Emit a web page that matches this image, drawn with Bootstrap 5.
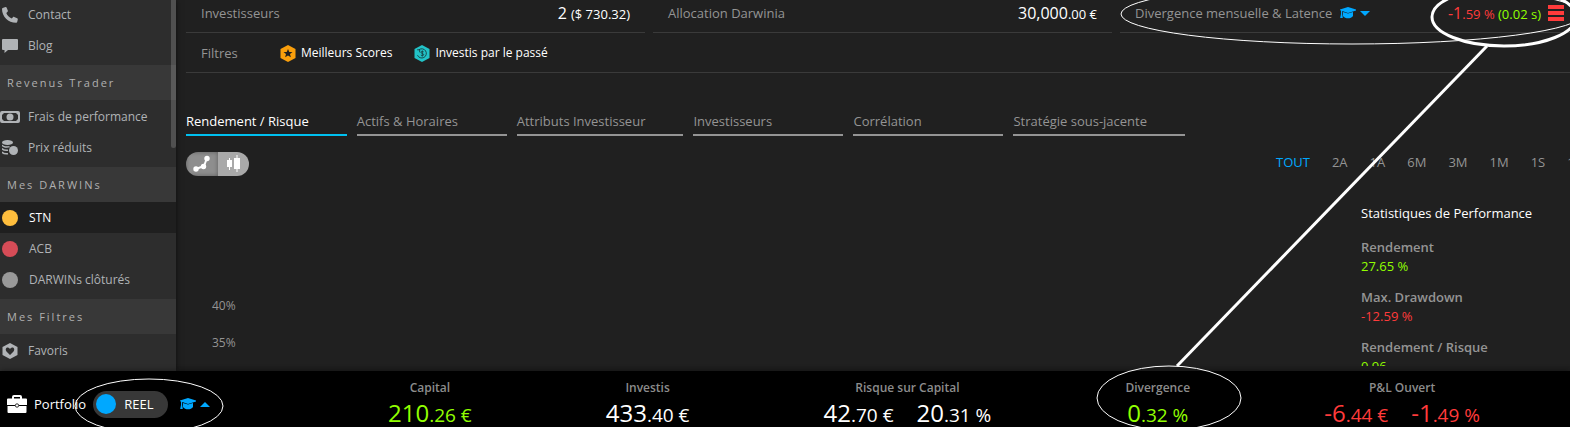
<!DOCTYPE html>
<html lang="fr">
<head>
<meta charset="utf-8">
<meta name="viewport" content="width=device-width, initial-scale=1">
<title>STN - Rendement / Risque</title>
<link href="https://cdn.jsdelivr.net/npm/bootstrap@5.3.0/dist/css/bootstrap.min.css" rel="stylesheet">
<style>
:root{--grey:#949494;--blue:#00a8ff;--green:#91ff00;--red:#ff3b3b;}
body{font-family:"Open Sans","Noto Sans",sans-serif;font-size:13px;line-height:20px;background:#202020;color:var(--grey);}
a{color:inherit;text-decoration:none;}
button{background:none;border:0;padding:0;color:inherit;}
svg{display:block;flex:none;}
/* sidebar */
.side{width:176px;background:#2d2d2d;color:#b0b3b6;font-size:12px;box-shadow:0 0 6px rgba(0,0,0,.6);z-index:2;}
.side-scroll{width:5px;height:148px;background:rgba(255,255,255,.17);border-radius:0 0 3px 3px;top:0;right:0;}
.side-inner{margin-top:-2px;}
.side-group{padding:1px 0 4px;}
.side-head{height:35px;padding-left:7px;background:#383838;letter-spacing:2px;color:#b0b0b0;font-size:11px;}
.side-link{height:31px;padding-left:2px;gap:10px;}
.side-link.current{background:#1f1f1f;color:#fff;}
.side-wide{padding-left:0;gap:8px;}
.side-darwin{gap:11px;}
.dot{width:16px;height:16px;border-radius:50%;flex:none;}
/* main */
.content{padding-left:10px;border-bottom:5px solid #1e1e1e;}
.wide{margin-right:-9px;}
.summary{gap:8px;}
.summary-cell{height:33px;padding:0 15px 6px;border-bottom:1px solid #3a3a3a;}
.fig{font-size:16px;}
.fig small{font-size:13px;}
.filters{height:40px;padding:1px 0 0 15px;border-bottom:1px solid #3a3a3a;color:var(--grey);}
.filters-title{width:79px;}
.filter-item{gap:5px;margin-right:22px;color:#fff;font-size:12px;}
.menu-btn{margin-left:7px;}
.tabs-row{margin-top:38px;gap:10px;}
.tab-item{min-width:150px;padding:0 38px 3px 0;border-bottom:2px solid #949494;}
.tab-item.active{color:#fff;border-color:#00c0f0;}
.tools{margin-top:16px;height:24px;}
.seg{border-radius:12px;overflow:hidden;}
.seg button{width:32px;height:24px;background:#a9a9a9;}
.seg button.active{background:#8e8e8e;box-shadow:inset 0 0 4px rgba(0,0,0,.35);}
.seg button+button{width:31px;}
.periods{gap:22px;width:294px;flex:none;margin-top:-4px;}
.chart-axis{padding:120px 0 0 26px;font-size:12px;gap:17px;}
.stats{width:209px;padding-top:27px;flex:none;}
.stats dt{font-weight:600;line-height:20px;color:#949494;}
.stats dd{line-height:18px;margin-bottom:12px;}
.stats-title{font-size:13px;line-height:20px;color:#fff;margin-bottom:14px;}
/* footer */
.dock{height:56px;background:#000;z-index:3;box-shadow:0 0 6px rgba(0,0,0,.45);}
.dock-left{width:388px;padding:10px 0 0 7px;flex:none;}
.dock-name{color:#fff;margin:0 7px;}
.mode{width:75px;height:27px;border-radius:14px;background:#383838;color:#fff;padding-left:3px;font-size:13px;gap:8px;margin-right:12px;}
.mode-knob{width:20px;height:20px;border-radius:50%;background:var(--blue);}
.dock-stats{padding:7px 90px 0 0;}
.dock-label{font-size:12px;font-weight:600;line-height:20px;color:#8c8c8c;}
.dock-val{font-size:24px;line-height:29px;color:#fff;gap:23px;}
.dock-val small{font-size:19px;}
.c-blue{color:var(--blue);} .c-green{color:var(--green);} .c-red{color:var(--red);}
.notes{inset:0;z-index:10;pointer-events:none;}
</style>
</head>
<body>
<svg width="0" height="0" class="position-absolute">
  <symbol id="cap" viewBox="0 0 16 12"><path fill="currentColor" d="M8 0 16 2.500v1L8 5.900 2.200 4.100v3l.6 3.900H.2L1 7.100V3.500L0 3.200v-.7ZM3 5 8 6.500 13 5v4C12 10.500 10 11.300 8 11.300S4 10.500 3 9Z"/></symbol>
</svg>
<div class="vh-100 d-flex flex-column overflow-hidden position-relative">
  <div class="d-flex flex-grow-1 overflow-hidden">
    <nav class="side position-relative flex-shrink-0">
      <div class="side-scroll position-absolute"></div>
      <div class="side-inner">
        <div class="side-group">
          <a href="#" class="side-link d-flex align-items-center"><svg width="16" height="16" viewBox="0 0 16 16"><path fill="currentColor" d="M1.300.7 3.500.1c.5-.1.9.1 1.100.5l1.200 3c.2.4.1.8-.2 1.100L4.300 5.900c.9 2.300 2.900 4.400 5.500 5.600l1.300-1.400c.3-.3.7-.4 1.100-.2l3 1.400c.5.2.7.6.6 1.100l-.6 2.600c-.1.500-.500.8-1 .8C6.300 15.900 0 9.500 0 2 0 1.300.6.800 1.300.7Z"/></svg>Contact</a>
          <a href="#" class="side-link d-flex align-items-center"><svg width="16" height="16" viewBox="0 0 16 16"><path fill="currentColor" d="M1 1h14q1 0 1 1v9q0 1-1 1H6l-3.500 3V12H1q-1 0-1-1V2q0-1 1-1Z"/></svg>Blog</a>
        </div>
        <div class="side-head d-flex align-items-center">Revenus Trader</div>
        <div class="side-group">
          <a href="#" class="side-link side-wide d-flex align-items-center"><svg width="20" height="12" viewBox="0 0 20 12"><rect x="1" y="1" width="18" height="10" rx="1" fill="none" stroke="currentColor" stroke-width="2"/><path fill="currentColor" d="M1 1h4L1 5Zm18 0h-4l4 4ZM1 11h4L1 7Zm18 0h-4l4-4Z"/><circle cx="10" cy="6" r="3.500" fill="currentColor"/></svg>Frais de performance</a>
          <a href="#" class="side-link d-flex align-items-center"><svg width="16" height="16" viewBox="0 0 16 16"><ellipse cx="5.500" cy="2.500" rx="5.500" ry="2.500" fill="currentColor"/><path d="M0 5c1 2 5 2.500 7.500 1.600M0 8.500c1 1.500 4 2 6 1.700M0 12c1 1.500 4 2 6 1.700" fill="none" stroke="currentColor" stroke-width="1.500"/><circle cx="11.500" cy="10.500" r="4.500" fill="currentColor"/></svg>Prix réduits</a>
        </div>
        <div class="side-head d-flex align-items-center">Mes DARWINs</div>
        <div class="side-group pt-0">
          <a href="#" class="side-link side-darwin current d-flex align-items-center"><span class="dot" style="background:#ffbe3d"></span>STN</a>
          <a href="#" class="side-link side-darwin d-flex align-items-center"><span class="dot" style="background:#d64c57"></span>ACB</a>
          <a href="#" class="side-link side-darwin d-flex align-items-center"><span class="dot" style="background:#999"></span>DARWINs clôturés</a>
        </div>
        <div class="side-head d-flex align-items-center">Mes Filtres</div>
        <div class="side-group">
          <a href="#" class="side-link d-flex align-items-center"><svg width="16" height="16" viewBox="0 0 16 16"><path fill="currentColor" d="m8 0 7.500 4v8L8 16 .5 12V4Z"/><path fill="#2d2d2d" d="M8 12 4.500 8.500C3 6.500 4 4.500 5.700 4.500 7 4.500 8 6 8 6s1-1.500 2.300-1.500C12 4.500 13 6.500 11.500 8.500Z"/></svg>Favoris</a>
        </div>
      </div>
    </nav>

    <main class="content flex-grow-1 overflow-hidden">
      <div class="wide">
        <div class="summary d-flex">
          <div class="summary-cell col d-flex align-items-center justify-content-between"><span>Investisseurs</span><span class="fig text-white">2 <small>($ 730.32)</small></span></div>
          <div class="summary-cell col d-flex align-items-center justify-content-between"><span>Allocation Darwinia</span><span class="fig text-white">30,000<small>.00 €</small></span></div>
          <div class="summary-cell col d-flex align-items-center">
            <span>Divergence mensuelle &amp; Latence</span>
            <button type="button" class="c-blue d-flex align-items-center gap-1 ms-2" aria-label="Aide"><svg width="16" height="12"><use href="#cap"/></svg><svg width="10" height="5" viewBox="0 0 10 5"><path fill="currentColor" d="M0 0h10L5 5Z"/></svg></button>
            <span class="fig c-red ms-auto">-1<small>.59 % <span class="c-green">(0.02 s)</span></small></span>
            <button type="button" class="menu-btn c-red" aria-label="Menu"><svg width="16" height="16" viewBox="0 0 16 16"><path fill="currentColor" d="M0 0h16v4H0Zm0 6h16v4H0Zm0 6h16v4H0Z"/></svg></button>
          </div>
        </div>
        <div class="filters d-flex align-items-center">
          <span class="filters-title">Filtres</span>
          <a href="#" class="filter-item d-flex align-items-center"><svg width="16" height="17" viewBox="0 0 16 17"><path fill="#fa9f0c" d="m8 0 7.500 4v9L8 17 .5 13V4Z"/><path fill="#202020" d="m8 4 1.300 3h3.200L10 9l.9 3.200L8 10.500l-2.900 1.700L6 9 3.500 7h3.200Z"/></svg>Meilleurs Scores</a>
          <a href="#" class="filter-item d-flex align-items-center"><svg width="16" height="17" viewBox="0 0 16 17"><path fill="#22c3c8" d="m8 0 7.500 4v9L8 17 .5 13V4Z"/><path d="M5 4.700a4.600 4.600 0 1 1-1.500 5.500M3.200 4.800h2.500v2.500M9.600 6.800C8.500 6 6.900 6.500 7 7.500c.1 1.200 2.700.8 2.700 2.100 0 1.200-1.900 1.300-2.900.5M8.300 5.500v6" fill="none" stroke="#17474a"/></svg>Investis par le passé</a>
        </div>
        <div class="tabs-row d-flex">
          <a href="#" class="tab-item active">Rendement / Risque</a>
          <a href="#" class="tab-item">Actifs &amp; Horaires</a>
          <a href="#" class="tab-item">Attributs Investisseur</a>
          <a href="#" class="tab-item">Investisseurs</a>
          <a href="#" class="tab-item">Corrélation</a>
          <a href="#" class="tab-item">Stratégie sous-jacente</a>
        </div>
      </div>
      <div class="tools d-flex justify-content-between align-items-center">
        <div class="seg d-flex">
          <button type="button" class="active d-flex align-items-center justify-content-center" aria-label="Courbe"><svg width="18" height="18" viewBox="0 0 18 18"><path d="m3 14 8-3 3-8" fill="none" stroke="#fff" stroke-width="2"/><g fill="#fff"><circle cx="3" cy="14" r="2.700"/><circle cx="10.500" cy="11.500" r="2.700"/><circle cx="14" cy="3.500" r="2.700"/></g></svg></button>
          <button type="button" class="d-flex align-items-center justify-content-center" aria-label="Chandeliers"><svg width="14" height="18" viewBox="0 0 14 18"><path fill="#fff" d="M0 5h5v7H0Zm2-2h1v12H2ZM7 3h6v11H7Zm2.500-3h1v17h-1Z"/></svg></button>
        </div>
        <div class="periods d-flex">
          <a href="#" class="c-blue">TOUT</a><a href="#">2A</a><a href="#">1A</a><a href="#">6M</a><a href="#">3M</a><a href="#">1M</a><a href="#">1S</a><a href="#">1J</a>
        </div>
      </div>
      <div class="d-flex justify-content-between">
        <div class="chart-axis d-flex flex-column"><span>40%</span><span>35%</span></div>
        <section class="stats">
          <h2 class="stats-title">Statistiques de Performance</h2>
          <dl class="mb-0">
            <dt>Rendement</dt><dd class="c-green">27.65 %</dd>
            <dt>Max. Drawdown</dt><dd class="c-red">-12.59 %</dd>
            <dt>Rendement / Risque</dt><dd class="c-green">0.96</dd>
          </dl>
        </section>
      </div>
    </main>
  </div>

  <footer class="dock d-flex flex-shrink-0">
    <div class="dock-left d-flex align-items-center align-self-center">
      <svg width="20" height="18" viewBox="0 0 20 18"><path d="M6 4V2q0-1 1-1h6q1 0 1 1v2" fill="none" stroke="#fff" stroke-width="2"/><path fill="#fff" d="M1 3.500h18q1 0 1 1V10H0V4.500q0-1 1-1ZM.5 11h19v6q0 1-1 1h-17q-1 0-1-1Z"/><circle cx="10" cy="10.500" r="1.700" fill="#fff" stroke="#333"/></svg>
      <a href="#" class="dock-name">Portfolio</a>
      <button type="button" class="mode d-flex align-items-center" aria-pressed="true"><span class="mode-knob"></span>REEL</button>
      <button type="button" class="c-blue d-flex align-items-center gap-1" aria-label="Aide"><svg width="16" height="12"><use href="#cap"/></svg><svg width="10" height="5" viewBox="0 0 10 5"><path fill="currentColor" d="M0 5h10L5 0Z"/></svg></button>
    </div>
    <div class="dock-stats d-flex flex-grow-1 justify-content-between text-center">
      <div><div class="dock-label">Capital</div><div class="dock-val c-green">210<small>.26 €</small></div></div>
      <div><div class="dock-label">Investis</div><div class="dock-val">433<small>.40 €</small></div></div>
      <div><div class="dock-label">Risque sur Capital</div><div class="dock-val d-flex"><span>42<small>.70 €</small></span><span>20<small>.31 %</small></span></div></div>
      <div><div class="dock-label">Divergence</div><div class="dock-val c-green">0<small>.32 %</small></div></div>
      <div><div class="dock-label">P&amp;L Ouvert</div><div class="dock-val c-red d-flex"><span>-6<small>.44 €</small></span><span>-1<small>.49 %</small></span></div></div>
    </div>
  </footer>

  <!-- hand-drawn annotations over the page -->
  <svg class="notes position-absolute w-100 h-100" fill="none" stroke="#fff" aria-hidden="true">
    <ellipse cx="1352" cy="14" rx="231" ry="30"/>
    <ellipse cx="1504" cy="17" rx="72" ry="29" stroke-width="3"/>
    <path d="M1487 46 1177 366" stroke-width="3"/>
    <ellipse cx="1169" cy="398" rx="72" ry="32"/>
    <ellipse cx="149" cy="406" rx="74" ry="27"/>
  </svg>
</div>
</body>
</html>
